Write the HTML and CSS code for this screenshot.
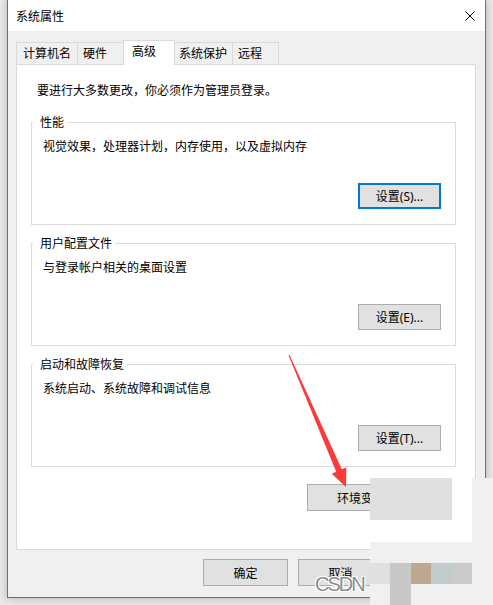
FILE: index.html
```html
<!DOCTYPE html>
<html lang="zh-CN">
<head>
    <meta charset="UTF-8">
    <meta name="viewport" content="width=device-width, initial-scale=1.0">
    <title>系统属性</title>
    <link rel="stylesheet" href="styles.css">
</head>
<body>

    <!-- Dialog window -->
    <div class="window">
        <div class="titlebar">
            <span class="title">系统属性</span>
            <svg class="close" width="10" height="10" viewBox="0 0 10 10">
                <path d="M0.5 0.5L9.5 9.5M9.5 0.5L0.5 9.5" stroke="#000" stroke-width="1" fill="none"/>
            </svg>
        </div>

        <div class="dialog">
            <!-- Tabs -->
            <div class="tabs">
                <div class="tab">计算机名</div>
                <div class="tab tab-short">硬件</div>
                <div class="tab active">高级</div>
                <div class="tab tab-tight">系统保护</div>
                <div class="tab tab-short">远程</div>
            </div>

            <!-- Advanced page -->
            <div class="panel">
                <p class="intro">要进行大多数更改，你必须作为管理员登录。</p>

                <fieldset class="group">
                    <legend>性能</legend>
                    <div class="group-body">
                        <p>视觉效果，处理器计划，内存使用，以及虚拟内存</p>
                        <div class="group-actions">
                            <button type="button" class="btn btn-default">设置(S)...</button>
                        </div>
                    </div>
                </fieldset>

                <fieldset class="group">
                    <legend>用户配置文件</legend>
                    <div class="group-body">
                        <p>与登录帐户相关的桌面设置</p>
                        <div class="group-actions">
                            <button type="button" class="btn">设置(E)...</button>
                        </div>
                    </div>
                </fieldset>

                <fieldset class="group">
                    <legend>启动和故障恢复</legend>
                    <div class="group-body">
                        <p>系统启动、系统故障和调试信息</p>
                        <div class="group-actions">
                            <button type="button" class="btn">设置(T)...</button>
                        </div>
                    </div>
                </fieldset>

                <div class="env-row">
                    <button type="button" class="btn btn-wide">环境变量(N)...</button>
                </div>
            </div>

            <!-- Dialog buttons -->
            <div class="footer">
                <button type="button" class="btn btn-footer">确定</button>
                <button type="button" class="btn btn-footer">取消</button>
                <button type="button" class="btn btn-footer">应用(A)</button>
            </div>
        </div>
    </div>

    <!-- Red annotation arrow -->
    <svg class="arrow" width="493" height="605" viewBox="0 0 493 605">
        <polygon points="288.5,355.2 289.5,354.8 341.8,469.3 346.3,467.3 346,487 331.7,473.7 336.2,471.7" fill="#fd3a3a"/>
    </svg>

    <!-- Pixelated corner of the screenshot -->
    <div class="mosaic">
        <div class="m-g"></div><div class="m-g"></div><div class="m-g"></div><div class="m-g"></div><div class="m-w"></div><div></div>
        <div class="m-g"></div><div class="m-g"></div><div class="m-g"></div><div class="m-g"></div><div class="m-w"></div><div></div>
        <div class="m-w"></div><div class="m-w"></div><div class="m-w"></div><div class="m-w"></div><div class="m-w"></div><div></div>
        <div></div><div></div><div></div><div></div><div></div><div></div>
        <div class="m-g"></div><div class="m-c8"></div><div class="m-tan"></div><div class="m-teal"></div><div class="m-cb"></div><div></div>
        <div></div><div class="m-c8"></div><div></div><div></div><div></div><div></div>
    </div>

    <div class="watermark">CSDN</div>

</body>
</html>
```

FILE: styles.css
```css
/* Page */
body {
    margin: 0;
    height: 605px;
    overflow: hidden;
    position: relative;
    background-color: #e9e9e9;
    font-family: "Noto Sans", "Noto Sans CJK SC", sans-serif;
    font-size: 12px;
    color: #000;
}

p {
    margin: 0;
    line-height: 16px;
}

/* Window frame */
.window {
    margin-left: 7px;
    width: 479px;
    height: 598px;
    box-sizing: border-box;
    border: 1px solid #707070;
    border-top: none;
    background-color: #f0f0f0;
    box-shadow: 0 0 8px rgba(0, 0, 0, 0.25);
    display: flex;
    flex-direction: column;
}

.titlebar {
    height: 31px;
    flex-shrink: 0;
    background-color: #fff;
    display: flex;
    align-items: center;
    justify-content: space-between;
    padding: 0 10px 0 8px;
}

.close {
    display: block;
}

.dialog {
    flex: 1;
    padding: 9px 9px 0 8px;
}

/* Tabs */
.tabs {
    height: 24px;
    display: flex;
    align-items: flex-end;
}

.tab {
    height: 22px;
    box-sizing: border-box;
    border: 1px solid #d9d9d9;
    border-bottom: none;
    margin-left: -1px;
    padding: 0 6px;
    line-height: 21px;
    background-color: #f0f0f0;
    white-space: nowrap;
}

.tab:first-child {
    margin-left: 0;
}

.tab-short {
    min-width: 47px;
    padding-left: 5px;
}

.tab-tight {
    padding: 0 5px 0 4px;
}

.tab.active {
    height: 25px;
    min-width: 52px;
    margin-bottom: -1px;
    padding: 0 8px;
    line-height: 22px;
    background-color: #fff;
    position: relative;
    z-index: 1;
}

/* Tab page */
.panel {
    height: 486px;
    box-sizing: border-box;
    background-color: #fff;
    border: 1px solid #d9d9d9;
    padding: 18px 19px 0 14px;
}

.intro {
    margin-left: 6px;
}

.group {
    margin: 16px 0 0 0;
    padding: 0;
    min-width: 0;
    border: 1px solid #dcdcdc;
}

.group + .group {
    margin-top: 11px;
}

.group legend {
    margin-left: 1px;
    padding: 0 3px 0 7px;
    line-height: 15px;
}

.group-body {
    padding: 9px 14px 15px 11px;
}

.group-actions {
    margin-top: 28px;
    display: flex;
    justify-content: flex-end;
}

.env-row {
    margin-top: 17px;
    padding-right: 15px;
    display: flex;
    justify-content: flex-end;
}

/* Buttons */
.btn {
    width: 83px;
    height: 26px;
    box-sizing: border-box;
    padding: 0;
    border: 1px solid #adadad;
    background-color: #e1e1e1;
    font-family: inherit;
    font-size: 12px;
    color: #000;
}

.btn-default {
    border: 2px solid #0078d7;
}

.btn-wide {
    width: 134px;
    height: 27px;
}

.footer {
    padding-top: 9px;
    margin-right: -2px;
    display: flex;
    justify-content: flex-end;
    gap: 10px;
}

.btn-footer {
    width: 85px;
    height: 27px;
}

/* Overlays on the screenshot */
.arrow {
    position: absolute;
    left: 0;
    top: 0;
    pointer-events: none;
}

.mosaic {
    position: absolute;
    left: 370px;
    top: 478px;
    width: 123px;
    height: 127px;
    display: grid;
    grid-template-columns: 20px 21px 20px 21px 20px 21px;
    grid-template-rows: 21px 21px 22px 21px 21px 21px;
    background-color: #f0f0f0;
}

.m-g { background-color: #e0e0e0; }
.m-w { background-color: #fff; }
.m-c8 { background-color: #c8c8c8; }
.m-tan { background-color: #bfa890; }
.m-teal { background-color: #c1cdcd; }
.m-cb { background-color: #cbcbcb; }

.watermark {
    position: absolute;
    left: 315px;
    top: 574px;
    font-family: "Liberation Sans", Arial, sans-serif;
    font-size: 20px;
    line-height: 20px;
    letter-spacing: -2px;
    color: #8e8e8e;
    text-shadow: 1px 1px 0 #fff, -1px -1px 0 #fff, 1px -1px 0 #fff, -1px 1px 0 #fff;
}
```
